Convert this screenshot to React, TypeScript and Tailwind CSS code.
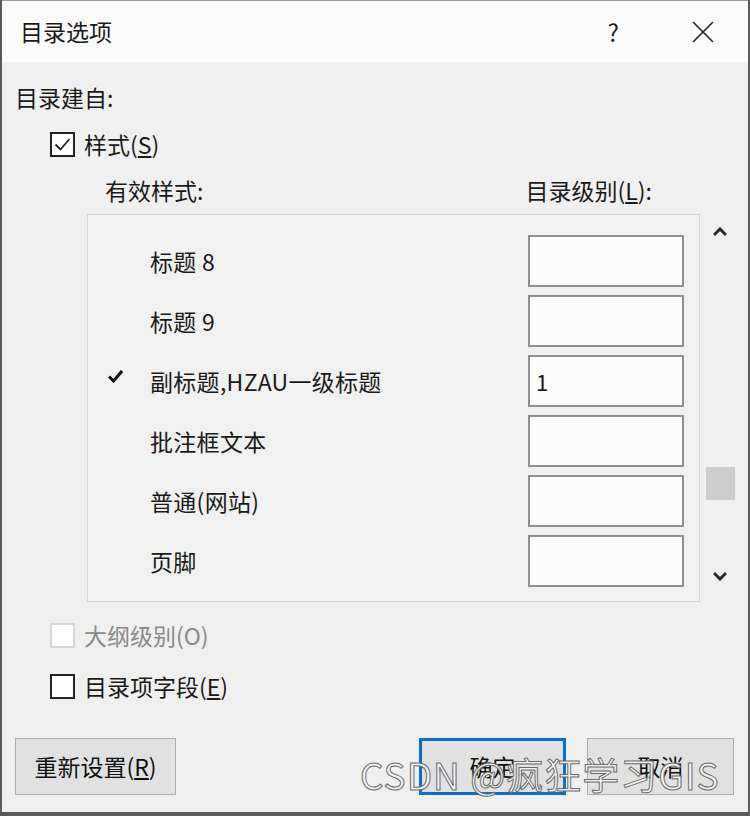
import React from "react"

const FONT = "font-['Microsoft_YaHei_UI','Noto_Sans_CJK_SC',sans-serif]"

type Row = { name: string; level: string; used?: boolean }

const ROWS: Row[] = [
  { name: "标题 8", level: "" },
  { name: "标题 9", level: "" },
  { name: "副标题,HZAU一级标题", level: "1", used: true },
  { name: "批注框文本", level: "" },
  { name: "普通(网站)", level: "" },
  { name: "页脚", level: "" },
]

function Check({ checked, disabled }: { checked?: boolean; disabled?: boolean }) {
  return (
    <span
      className={
        "flex h-[25px] w-[25px] items-center justify-center border-2 bg-white " +
        (disabled ? "border-[#d6d6d6]" : "border-[#222]")
      }
    >
      {checked && (
        <svg width="19" height="19" viewBox="0 0 19 19" fill="none">
          <path d="M2.5 9.5 L7.5 14.5 L16.5 4" stroke="#222" strokeWidth="1.8" />
        </svg>
      )}
    </span>
  )
}

function Btn({ children, primary }: { children: React.ReactNode; primary?: boolean }) {
  return (
    <button
      className={
        "flex h-[57px] w-[147px] items-center justify-center bg-[#e1e1e1] text-[23px] text-[#111] " +
        (primary ? "border-[3px] border-[#0a6fd1]" : "border border-[#adadad]")
      }
    >
      {children}
    </button>
  )
}

export default function App() {
  return (
    <div
      className={
        FONT +
        " relative flex h-[816px] w-[750px] flex-col overflow-hidden border-b-4 border-l-2 border-r-2 border-[#5a5a5a] bg-[#f0f0f0] text-[#1a1a1a]"
      }
    >
      {/* title bar */}
      <div className="flex h-[62px] shrink-0 items-center border-t border-[#9a9a9a] bg-[#fbfbfb] pl-[18px]">
        <span className="text-[23px]">目录选项</span>
        <span className="ml-auto mr-[73px] text-[24px]">?</span>
        <svg className="mr-[34px]" width="22" height="22" viewBox="0 0 22 22">
          <path d="M1 1 L21 21 M21 1 L1 21" stroke="#222" strokeWidth="1.6" />
        </svg>
      </div>

      <div className="mt-[20px] h-[30px] pl-[13px] text-[23px] leading-[30px]">目录建自:</div>

      <label className="mt-[20px] flex h-[25px] items-center gap-[9px] pl-[48px] text-[23px]">
        <Check checked />
        <span>
          样式(<u className="underline-offset-2">S</u>)
        </span>
      </label>

      <div className="mt-[18px] flex h-[30px] items-center text-[23px]">
        <span className="pl-[103px]">有效样式:</span>
        <span className="ml-[322px]">
          目录级别(<u className="underline-offset-2">L</u>):
        </span>
      </div>

      {/* style list with scroll bar */}
      <div className="mt-[9px] flex h-[388px] pl-[85px]">
        <div className="w-[613px] border border-[#d7d7d7] bg-[#f1f1f1] pt-[16px]">
          {ROWS.map((r) => (
            <div key={r.name} className="flex h-[60px] items-center">
              <span className="flex w-[62px] pl-[20px]">
                {r.used && (
                  <svg className="-mt-[10px]" width="15" height="14" viewBox="0 0 15 14">
                    <path d="M1 7.5 L5.5 12 L14 2" stroke="#111" strokeWidth="3" fill="none" />
                  </svg>
                )}
              </span>
              <span className="w-[378px] text-[23px] tracking-[0.3px]">{r.name}</span>
              <div className="flex h-[52px] w-[156px] items-center border-2 border-[#8f8f8f] bg-[#fcfcfc] pl-[6px] text-[22px]">
                {r.level}
              </div>
            </div>
          ))}
        </div>
        <div className="flex w-[40px] flex-col items-center">
          <svg className="mt-[13px]" width="14" height="10" viewBox="0 0 14 10">
            <path d="M1 8 L7 2 L13 8" stroke="#2a2a2a" strokeWidth="3" fill="none" />
          </svg>
          <div className="mt-[230px] h-[33px] w-[29px] bg-[#cdcdcd]" />
          <svg className="mt-[71px]" width="14" height="10" viewBox="0 0 14 10">
            <path d="M1 2 L7 8 L13 2" stroke="#2a2a2a" strokeWidth="3" fill="none" />
          </svg>
        </div>
      </div>

      <label className="mt-[21px] flex h-[25px] items-center gap-[9px] pl-[48px] text-[23px] text-[#8a8a8a]">
        <Check disabled />
        <span>大纲级别(O)</span>
      </label>

      <label className="mt-[26px] flex h-[25px] items-center gap-[9px] pl-[48px] text-[23px]">
        <Check />
        <span>
          目录项字段(<u className="underline-offset-2">E</u>)
        </span>
      </label>

      <div className="mt-[39px] flex items-start pl-[13px]">
        <button className="flex h-[57px] w-[161px] items-center justify-center border border-[#adadad] bg-[#e1e1e1] text-[23px] text-[#111]">
          重新设置(<u className="underline-offset-2">R</u>)
        </button>
        <div className="ml-[243px]">
          <Btn primary>确定</Btn>
        </div>
        <div className="ml-[21px]">
          <Btn>取消</Btn>
        </div>
      </div>

      {/* watermark overlay */}
      <div className="pointer-events-none absolute left-[358px] top-[751px] text-[37px] leading-[46px] tracking-[1px] text-[#f4f4f4] [-webkit-text-stroke:1px_#6a6a6a]">
        CSDN @疯狂学习GIS
      </div>
    </div>
  )
}
